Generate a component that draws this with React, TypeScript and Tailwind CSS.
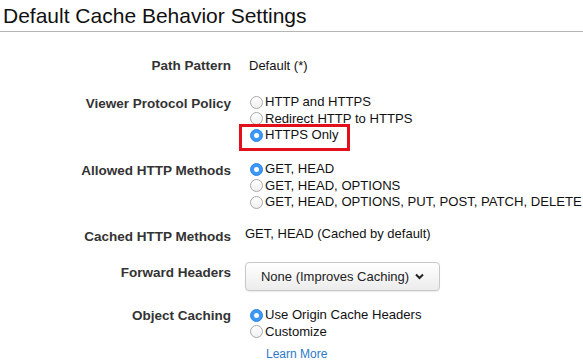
const FONT = "font-['Liberation_Sans',Arial,sans-serif]";
const LABEL = "w-[231px] shrink-0 text-right font-bold text-[13.5px] leading-[16.5px] text-[#333]";

function Radio({ checked }: { checked?: boolean }) {
  if (checked) {
    return (
      <span className="w-[13px] h-[13px] rounded-full bg-[#3d97f7] border border-[#2f86e8] flex items-center justify-center shrink-0">
        <span className="w-[5px] h-[5px] rounded-full bg-white" />
      </span>
    );
  }
  return <span className="w-[13px] h-[13px] rounded-full border border-[#a9a9a9] bg-gradient-to-b from-white to-[#f0f0f0] shrink-0" />;
}

function Option({ label, checked }: { label: string; checked?: boolean }) {
  return (
    <label className="flex items-center gap-[2px] h-[16.5px] text-[13.1px] text-[#111] whitespace-nowrap">
      <Radio checked={checked} />
      <span>{label}</span>
    </label>
  );
}

export default function App() {
  return (
    <div className={`${FONT} w-[583px] h-[364px] bg-white overflow-hidden`}>
      <div className="h-[31px] pl-[3px] pt-[3px] text-[21px] text-[#111] leading-[26px]">
        Default Cache Behavior Settings
      </div>
      <div className="h-px bg-[#b5b5b5]" />

      {/* Path Pattern */}
      <div className="flex gap-[18px] mt-[25.75px]">
        <div className={LABEL}>Path Pattern</div>
        <div className="text-[13px] leading-[16.5px] text-[#111]">Default (*)</div>
      </div>

      {/* Viewer Protocol Policy */}
      <div className="flex gap-[19px] mt-[19.5px]">
        <div className={`${LABEL} pt-[2px]`}>Viewer Protocol Policy</div>
        <div className="relative">
          <Option label="HTTP and HTTPS" />
          <Option label="Redirect HTTP to HTTPS" />
          <Option label="HTTPS Only" checked />
          <div className="absolute left-[-11px] top-[30px] w-[111px] h-[27px] border-[3px] border-[#e3101c]" />
        </div>
      </div>

      {/* Allowed HTTP Methods */}
      <div className="flex gap-[19px] mt-[17.5px]">
        <div className={`${LABEL} pt-[2px]`}>Allowed HTTP Methods</div>
        <div>
          <Option label="GET, HEAD" checked />
          <Option label="GET, HEAD, OPTIONS" />
          <Option label="GET, HEAD, OPTIONS, PUT, POST, PATCH, DELETE" />
        </div>
      </div>

      {/* Cached HTTP Methods */}
      <div className="flex gap-[14px] mt-[15.5px]">
        <div className={`${LABEL} pt-[3px]`}>Cached HTTP Methods</div>
        <div className="text-[13px] leading-[16.5px] text-[#111]">GET, HEAD (Cached by default)</div>
      </div>

      {/* Forward Headers */}
      <div className="flex gap-[14px] mt-[16.75px]">
        <div className={`${LABEL} pt-[3px]`}>Forward Headers</div>
        <button className="w-[195px] h-[29px] rounded-[4px] border border-[#c8c8c8] bg-gradient-to-b from-white to-[#ececec] flex items-center justify-center gap-[6px] text-[13px] text-[#222] shadow-[0_1px_1px_rgba(0,0,0,0.08)]">
          <span>None (Improves Caching)</span>
          <svg width="9" height="7" viewBox="0 0 9 7">
            <path d="M1 1.5 L4.5 5 L8 1.5" fill="none" stroke="#222" strokeWidth="2" />
          </svg>
        </button>
      </div>

      {/* Object Caching */}
      <div className="flex gap-[19px] mt-[15.75px]">
        <div className={`${LABEL} pt-[1px]`}>Object Caching</div>
        <div>
          <Option label="Use Origin Cache Headers" checked />
          <Option label="Customize" />
          <a className="block mt-[6px] ml-[16px] text-[12px] leading-[16.5px] text-[#2b7bcb]">Learn More</a>
        </div>
      </div>
    </div>
  );
}
